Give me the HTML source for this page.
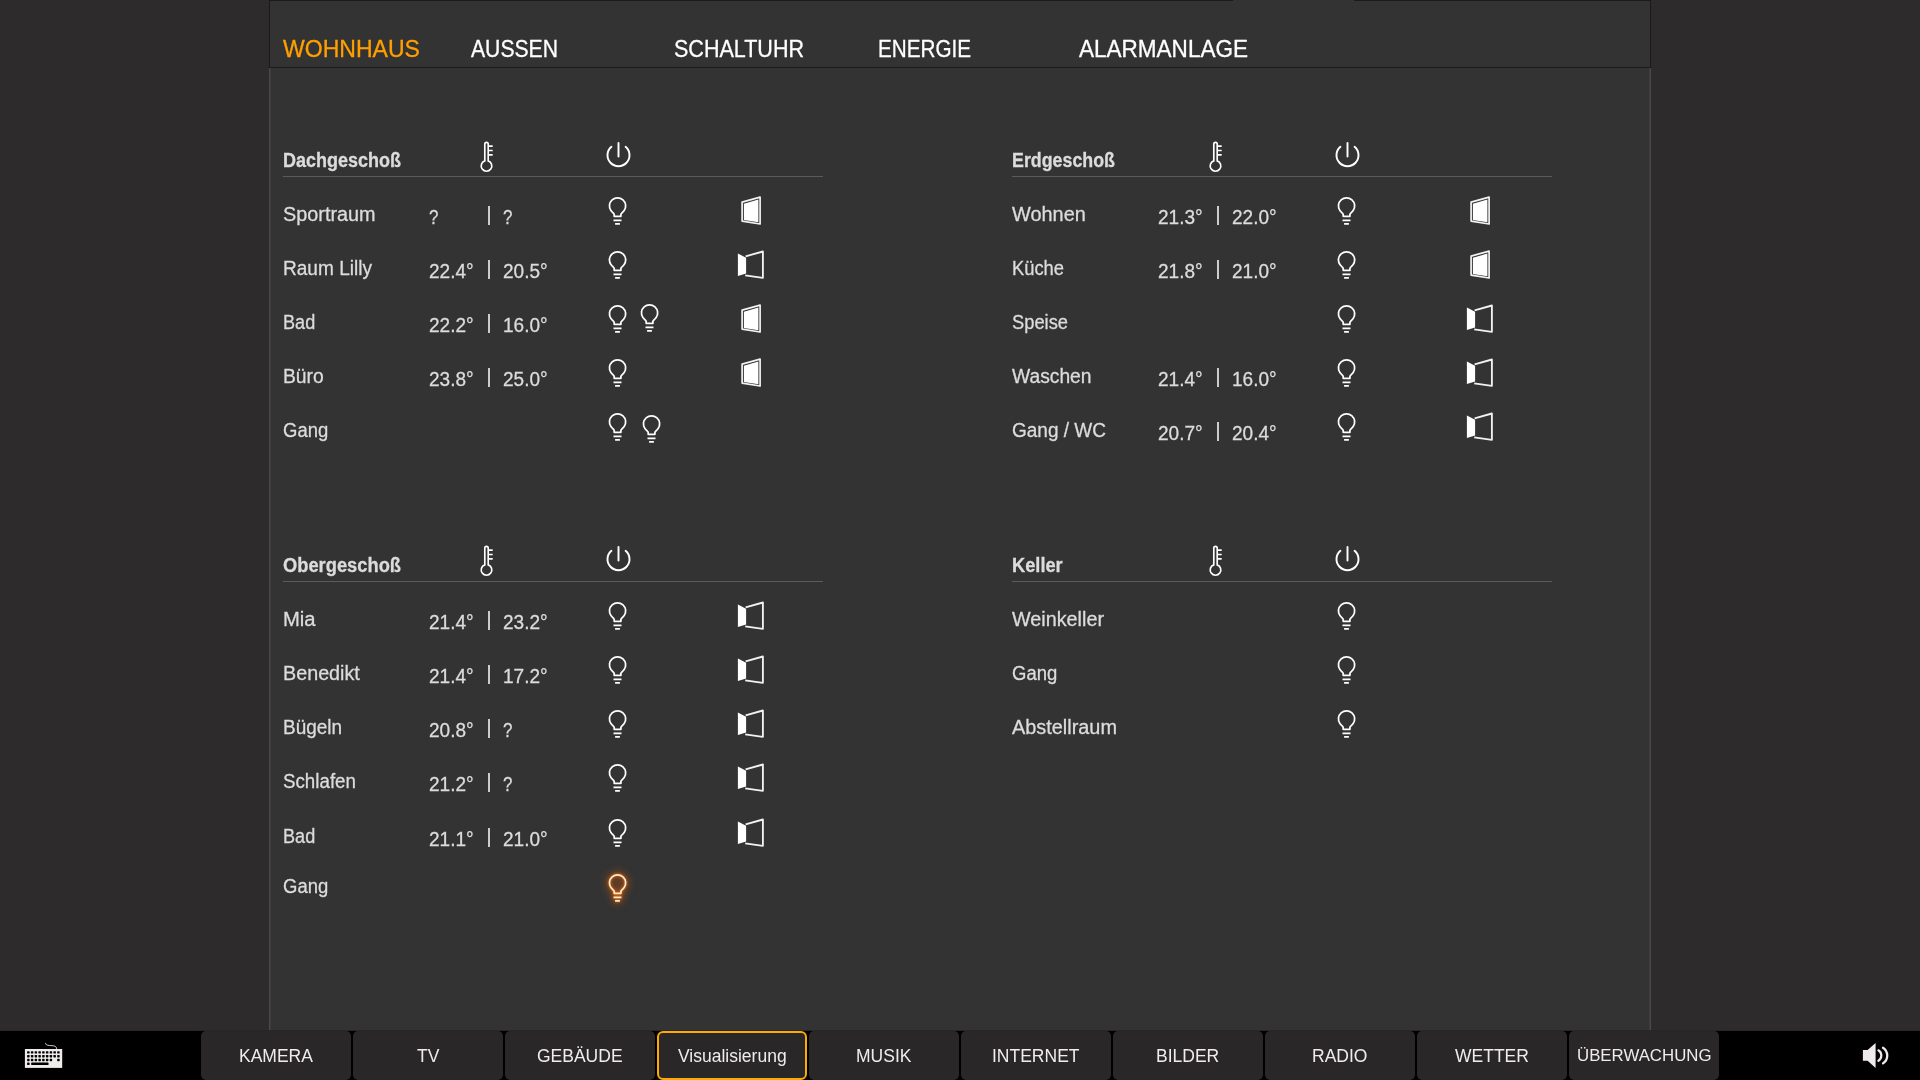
<!DOCTYPE html>
<html><head><meta charset="utf-8"><title>Visualisierung</title>
<style>
html,body{margin:0;padding:0;width:1920px;height:1080px;overflow:hidden;background:#2d2b2c;font-family:"Liberation Sans",sans-serif;}
.t{position:absolute;white-space:nowrap;transform-origin:0 0;-webkit-text-stroke:0.3px currentColor;}
.i{position:absolute;overflow:visible;}
.nf{-webkit-text-stroke:0;}
#hdr{position:absolute;left:269px;top:0;width:1380px;height:66px;background:#333;border:1px solid #1b1b1b;}
#gap{position:absolute;left:1233px;top:0;width:121px;height:1px;background:#333;}
#pnl{position:absolute;left:269px;top:68px;width:1380px;height:962px;background:#333;border-left:1px solid #494949;border-right:1px solid #494949;box-shadow:inset 1px 0 #3c3c3c,inset -1px 0 #3c3c3c;}
.ln{position:absolute;width:540px;height:1px;background:#5b5b5b;}
.bar{position:absolute;width:2.4px;height:19px;background:#cccccc;}
#foot{position:absolute;left:0;top:1030px;width:1920px;height:50px;background:#000;border-top:1px solid #2a2626;box-sizing:border-box;}
.btn{position:absolute;top:1031px;width:150px;height:49px;background:#292728;border-radius:5px;box-sizing:border-box;}
.btn.sel{border:2px solid #ffaa00;border-radius:6px;}
</style></head><body>
<div id="hdr"></div><div id="gap"></div>
<div id="pnl"></div>
<div id="foot"></div>
<div class="btn" style="left:201px"></div><div class="btn" style="left:353px"></div><div class="btn" style="left:505px"></div><div class="btn sel" style="left:657px"></div><div class="btn" style="left:809px"></div><div class="btn" style="left:961px"></div><div class="btn" style="left:1113px"></div><div class="btn" style="left:1265px"></div><div class="btn" style="left:1417px"></div><div class="btn" style="left:1569px"></div>
<svg class="i" style="left:20px;top:1038px" width="48" height="34" viewBox="0 0 48 34">
<path d="M25.6 4.9C25.2 6.4 26.8 7.3 29.5 7.5C33 7.8 35.2 7.6 36.2 9.2C36.6 9.9 36.6 10.5 36.6 11.2" fill="none" stroke="#e8e4e4" stroke-width="0.9"/>
<rect x="4.9" y="11" width="37.3" height="18.9" fill="#f0ecec"/>
<g fill="#000"><rect x="7.10" y="13.2" width="2.5" height="2.4" rx="0.6"/><rect x="10.86" y="13.2" width="2.5" height="2.4" rx="0.6"/><rect x="14.62" y="13.2" width="2.5" height="2.4" rx="0.6"/><rect x="18.38" y="13.2" width="2.5" height="2.4" rx="0.6"/><rect x="22.14" y="13.2" width="2.5" height="2.4" rx="0.6"/><rect x="25.90" y="13.2" width="2.5" height="2.4" rx="0.6"/><rect x="29.66" y="13.2" width="2.5" height="2.4" rx="0.6"/><rect x="33.42" y="13.2" width="2.5" height="2.4" rx="0.6"/><rect x="37.18" y="13.2" width="2.5" height="2.4" rx="0.6"/><rect x="7.10" y="17.0" width="2.5" height="2.4" rx="0.6"/><rect x="10.86" y="17.0" width="2.5" height="2.4" rx="0.6"/><rect x="14.62" y="17.0" width="2.5" height="2.4" rx="0.6"/><rect x="18.38" y="17.0" width="2.5" height="2.4" rx="0.6"/><rect x="22.14" y="17.0" width="2.5" height="2.4" rx="0.6"/><rect x="25.90" y="17.0" width="2.5" height="2.4" rx="0.6"/><rect x="29.66" y="17.0" width="2.5" height="2.4" rx="0.6"/><rect x="33.42" y="17.0" width="2.5" height="2.4" rx="0.6"/><rect x="37.18" y="17.0" width="2.5" height="2.4" rx="0.6"/><rect x="7.10" y="20.8" width="2.5" height="2.4" rx="0.6"/><rect x="10.86" y="20.8" width="2.5" height="2.4" rx="0.6"/><rect x="14.62" y="20.8" width="2.5" height="2.4" rx="0.6"/><rect x="18.38" y="20.8" width="2.5" height="2.4" rx="0.6"/><rect x="22.14" y="20.8" width="2.5" height="2.4" rx="0.6"/><rect x="25.90" y="20.8" width="2.5" height="2.4" rx="0.6"/><rect x="29.66" y="20.8" width="2.5" height="2.4" rx="0.6"/><rect x="37.18" y="20.8" width="2.5" height="2.4" rx="0.6"/><rect x="7.10" y="24.6" width="2.5" height="2.4" rx="0.6"/><rect x="11.2" y="24.6" width="17.3" height="2.4" rx="0.6"/></g></svg>
<svg class="i" style="left:1855px;top:1038px" width="40" height="34" viewBox="0 0 40 34"><path d="M7.9 12.1H12.6L20.6 5V29.9L12.6 22.7H7.9Z" fill="#f0ebeb"/><g fill="none" stroke="#f0ebeb" stroke-linecap="round"><path d="M23.4 12.3A6.2 6.2 0 0 1 23.4 22.8" stroke-width="2.2"/><path d="M28 9.8A9.3 9.3 0 0 1 28 25.4" stroke-width="2.3"/></g></svg>
<div class="t" style="left:283.00px;top:37px;font-size:24px;line-height:24px;color:#ffa000;transform:scaleX(0.9601);">WOHNHAUS</div><div class="t" style="left:471.00px;top:37px;font-size:24px;line-height:24px;color:#fff;transform:scaleX(0.8815);">AUSSEN</div><div class="t" style="left:674.00px;top:37px;font-size:24px;line-height:24px;color:#fff;transform:scaleX(0.8972);">SCHALTUHR</div><div class="t" style="left:878.00px;top:37px;font-size:24px;line-height:24px;color:#fff;transform:scaleX(0.8611);">ENERGIE</div><div class="t" style="left:1079.00px;top:37px;font-size:24px;line-height:24px;color:#fff;transform:scaleX(0.9384);">ALARMANLAGE</div><div class="t" style="left:283.00px;top:150px;font-size:20px;line-height:20px;color:#dcdcdc;font-weight:bold;transform:scaleX(0.9001);">Dachgeschoß</div><svg class="i" style="left:474px;top:138px" width="26" height="37" viewBox="0 0 26 37"><g fill="none" stroke="#fff" stroke-width="1.65"><path d="M10.8 22.9V6A1.7 1.7 0 0 1 14.2 6V22.9A5.3 5.3 0 1 1 10.8 22.9Z"/><path d="M14.2 8.05H18.7M14.2 12.5H18.7M14.2 16.8H18.7"/></g></svg><svg class="i" style="left:602px;top:137px" width="34" height="34" viewBox="0 0 34 34"><g fill="none" stroke="#fff" stroke-width="1.95" stroke-linecap="round"><path d="M16.5 5.9V19.4"/><path d="M9.4 9.8A11 11 0 1 0 23.6 9.8"/></g></svg><div class="ln" style="left:283px;top:176px"></div><div class="t" style="left:283.00px;top:204px;font-size:20px;line-height:20px;color:#dcdcdc;transform:scaleX(0.9914);">Sportraum</div><div class="t" style="left:429.00px;top:207px;font-size:20px;line-height:20px;color:#dcdcdc;transform:scaleX(0.8468);">?</div><div class="bar" style="left:487.6px;top:206px"></div><div class="t" style="left:503.00px;top:207px;font-size:20px;line-height:20px;color:#dcdcdc;transform:scaleX(0.8468);">?</div><svg class="i" style="left:604px;top:194px;" width="28" height="34" viewBox="0 0 28 34"><g fill="none" stroke="#fff" stroke-width="1.75"><path d="M10.2 22.3V20.6C10.2 19.2 8.07 18.2 6.92 16.55A8.1 8.1 0 1 1 20.18 16.55C19.03 18.2 16.9 19.2 16.9 20.6V22.3Z" stroke-linejoin="round"/><path d="M9.5 26.45H17.5M11.1 29.95H15.9"/></g></svg><svg class="i" style="left:736px;top:193px" width="30" height="35" viewBox="0 0 30 35"><path d="M6.1 9.1L24.1 4.1V31L6.1 28.1Z" fill="none" stroke="#f2f2f2" stroke-width="1.7" stroke-linejoin="round"/><path d="M7.9 10.7L22.4 6.6V29.2L7.9 26.9Z" fill="#fff"/></svg><div class="t" style="left:283.00px;top:258px;font-size:20px;line-height:20px;color:#dcdcdc;transform:scaleX(0.9529);">Raum Lilly</div><div class="t" style="left:429.00px;top:261px;font-size:20px;line-height:20px;color:#dcdcdc;transform:scaleX(0.9510);">22.4°</div><div class="bar" style="left:487.6px;top:260px"></div><div class="t" style="left:503.00px;top:261px;font-size:20px;line-height:20px;color:#dcdcdc;transform:scaleX(0.9510);">20.5°</div><svg class="i" style="left:604px;top:248px;" width="28" height="34" viewBox="0 0 28 34"><g fill="none" stroke="#fff" stroke-width="1.75"><path d="M10.2 22.3V20.6C10.2 19.2 8.07 18.2 6.92 16.55A8.1 8.1 0 1 1 20.18 16.55C19.03 18.2 16.9 19.2 16.9 20.6V22.3Z" stroke-linejoin="round"/><path d="M9.5 26.45H17.5M11.1 29.95H15.9"/></g></svg><svg class="i" style="left:733px;top:248px" width="35" height="35" viewBox="0 0 35 35"><path d="M12.6 8.3L29.9 3.5V29.8L12.2 27.3" fill="none" stroke="#f2f2f2" stroke-width="1.85" stroke-linejoin="round"/><path d="M4.9 5.5L13.1 9.7V25.6L4.9 27.9Z" fill="#fff"/></svg><div class="t" style="left:283.00px;top:312px;font-size:20px;line-height:20px;color:#dcdcdc;transform:scaleX(0.9045);">Bad</div><div class="t" style="left:429.00px;top:315px;font-size:20px;line-height:20px;color:#dcdcdc;transform:scaleX(0.9510);">22.2°</div><div class="bar" style="left:487.6px;top:314px"></div><div class="t" style="left:503.00px;top:315px;font-size:20px;line-height:20px;color:#dcdcdc;transform:scaleX(0.9510);">16.0°</div><svg class="i" style="left:604px;top:302px;" width="28" height="34" viewBox="0 0 28 34"><g fill="none" stroke="#fff" stroke-width="1.75"><path d="M10.2 22.3V20.6C10.2 19.2 8.07 18.2 6.92 16.55A8.1 8.1 0 1 1 20.18 16.55C19.03 18.2 16.9 19.2 16.9 20.6V22.3Z" stroke-linejoin="round"/><path d="M9.5 26.45H17.5M11.1 29.95H15.9"/></g></svg><svg class="i" style="left:636px;top:301px;" width="28" height="34" viewBox="0 0 28 34"><g fill="none" stroke="#fff" stroke-width="1.75"><path d="M10.2 22.3V20.6C10.2 19.2 8.07 18.2 6.92 16.55A8.1 8.1 0 1 1 20.18 16.55C19.03 18.2 16.9 19.2 16.9 20.6V22.3Z" stroke-linejoin="round"/><path d="M9.5 26.45H17.5M11.1 29.95H15.9"/></g></svg><svg class="i" style="left:736px;top:301px" width="30" height="35" viewBox="0 0 30 35"><path d="M6.1 9.1L24.1 4.1V31L6.1 28.1Z" fill="none" stroke="#f2f2f2" stroke-width="1.7" stroke-linejoin="round"/><path d="M7.9 10.7L22.4 6.6V29.2L7.9 26.9Z" fill="#fff"/></svg><div class="t" style="left:283.00px;top:366px;font-size:20px;line-height:20px;color:#dcdcdc;transform:scaleX(0.9645);">Büro</div><div class="t" style="left:429.00px;top:369px;font-size:20px;line-height:20px;color:#dcdcdc;transform:scaleX(0.9510);">23.8°</div><div class="bar" style="left:487.6px;top:368px"></div><div class="t" style="left:503.00px;top:369px;font-size:20px;line-height:20px;color:#dcdcdc;transform:scaleX(0.9510);">25.0°</div><svg class="i" style="left:604px;top:356px;" width="28" height="34" viewBox="0 0 28 34"><g fill="none" stroke="#fff" stroke-width="1.75"><path d="M10.2 22.3V20.6C10.2 19.2 8.07 18.2 6.92 16.55A8.1 8.1 0 1 1 20.18 16.55C19.03 18.2 16.9 19.2 16.9 20.6V22.3Z" stroke-linejoin="round"/><path d="M9.5 26.45H17.5M11.1 29.95H15.9"/></g></svg><svg class="i" style="left:736px;top:355px" width="30" height="35" viewBox="0 0 30 35"><path d="M6.1 9.1L24.1 4.1V31L6.1 28.1Z" fill="none" stroke="#f2f2f2" stroke-width="1.7" stroke-linejoin="round"/><path d="M7.9 10.7L22.4 6.6V29.2L7.9 26.9Z" fill="#fff"/></svg><div class="t" style="left:283.00px;top:420px;font-size:20px;line-height:20px;color:#dcdcdc;transform:scaleX(0.9243);">Gang</div><svg class="i" style="left:604px;top:410px;" width="28" height="34" viewBox="0 0 28 34"><g fill="none" stroke="#fff" stroke-width="1.75"><path d="M10.2 22.3V20.6C10.2 19.2 8.07 18.2 6.92 16.55A8.1 8.1 0 1 1 20.18 16.55C19.03 18.2 16.9 19.2 16.9 20.6V22.3Z" stroke-linejoin="round"/><path d="M9.5 26.45H17.5M11.1 29.95H15.9"/></g></svg><svg class="i" style="left:637.5px;top:411.8px;" width="28" height="34" viewBox="0 0 28 34"><g fill="none" stroke="#fff" stroke-width="1.75"><path d="M10.2 22.3V20.6C10.2 19.2 8.07 18.2 6.92 16.55A8.1 8.1 0 1 1 20.18 16.55C19.03 18.2 16.9 19.2 16.9 20.6V22.3Z" stroke-linejoin="round"/><path d="M9.5 26.45H17.5M11.1 29.95H15.9"/></g></svg><div class="t" style="left:1012.00px;top:150px;font-size:20px;line-height:20px;color:#dcdcdc;font-weight:bold;transform:scaleX(0.8910);">Erdgeschoß</div><svg class="i" style="left:1203px;top:138px" width="26" height="37" viewBox="0 0 26 37"><g fill="none" stroke="#fff" stroke-width="1.65"><path d="M10.8 22.9V6A1.7 1.7 0 0 1 14.2 6V22.9A5.3 5.3 0 1 1 10.8 22.9Z"/><path d="M14.2 8.05H18.7M14.2 12.5H18.7M14.2 16.8H18.7"/></g></svg><svg class="i" style="left:1331px;top:137px" width="34" height="34" viewBox="0 0 34 34"><g fill="none" stroke="#fff" stroke-width="1.95" stroke-linecap="round"><path d="M16.5 5.9V19.4"/><path d="M9.4 9.8A11 11 0 1 0 23.6 9.8"/></g></svg><div class="ln" style="left:1012px;top:176px"></div><div class="t" style="left:1012.00px;top:204px;font-size:20px;line-height:20px;color:#dcdcdc;transform:scaleX(0.9953);">Wohnen</div><div class="t" style="left:1158.00px;top:207px;font-size:20px;line-height:20px;color:#dcdcdc;transform:scaleX(0.9510);">21.3°</div><div class="bar" style="left:1216.6px;top:206px"></div><div class="t" style="left:1232.00px;top:207px;font-size:20px;line-height:20px;color:#dcdcdc;transform:scaleX(0.9510);">22.0°</div><svg class="i" style="left:1333px;top:194px;" width="28" height="34" viewBox="0 0 28 34"><g fill="none" stroke="#fff" stroke-width="1.75"><path d="M10.2 22.3V20.6C10.2 19.2 8.07 18.2 6.92 16.55A8.1 8.1 0 1 1 20.18 16.55C19.03 18.2 16.9 19.2 16.9 20.6V22.3Z" stroke-linejoin="round"/><path d="M9.5 26.45H17.5M11.1 29.95H15.9"/></g></svg><svg class="i" style="left:1465px;top:193px" width="30" height="35" viewBox="0 0 30 35"><path d="M6.1 9.1L24.1 4.1V31L6.1 28.1Z" fill="none" stroke="#f2f2f2" stroke-width="1.7" stroke-linejoin="round"/><path d="M7.9 10.7L22.4 6.6V29.2L7.9 26.9Z" fill="#fff"/></svg><div class="t" style="left:1012.00px;top:258px;font-size:20px;line-height:20px;color:#dcdcdc;transform:scaleX(0.9171);">Küche</div><div class="t" style="left:1158.00px;top:261px;font-size:20px;line-height:20px;color:#dcdcdc;transform:scaleX(0.9510);">21.8°</div><div class="bar" style="left:1216.6px;top:260px"></div><div class="t" style="left:1232.00px;top:261px;font-size:20px;line-height:20px;color:#dcdcdc;transform:scaleX(0.9510);">21.0°</div><svg class="i" style="left:1333px;top:248px;" width="28" height="34" viewBox="0 0 28 34"><g fill="none" stroke="#fff" stroke-width="1.75"><path d="M10.2 22.3V20.6C10.2 19.2 8.07 18.2 6.92 16.55A8.1 8.1 0 1 1 20.18 16.55C19.03 18.2 16.9 19.2 16.9 20.6V22.3Z" stroke-linejoin="round"/><path d="M9.5 26.45H17.5M11.1 29.95H15.9"/></g></svg><svg class="i" style="left:1465px;top:247px" width="30" height="35" viewBox="0 0 30 35"><path d="M6.1 9.1L24.1 4.1V31L6.1 28.1Z" fill="none" stroke="#f2f2f2" stroke-width="1.7" stroke-linejoin="round"/><path d="M7.9 10.7L22.4 6.6V29.2L7.9 26.9Z" fill="#fff"/></svg><div class="t" style="left:1012.00px;top:312px;font-size:20px;line-height:20px;color:#dcdcdc;transform:scaleX(0.9150);">Speise</div><svg class="i" style="left:1333px;top:302px;" width="28" height="34" viewBox="0 0 28 34"><g fill="none" stroke="#fff" stroke-width="1.75"><path d="M10.2 22.3V20.6C10.2 19.2 8.07 18.2 6.92 16.55A8.1 8.1 0 1 1 20.18 16.55C19.03 18.2 16.9 19.2 16.9 20.6V22.3Z" stroke-linejoin="round"/><path d="M9.5 26.45H17.5M11.1 29.95H15.9"/></g></svg><svg class="i" style="left:1462px;top:302px" width="35" height="35" viewBox="0 0 35 35"><path d="M12.6 8.3L29.9 3.5V29.8L12.2 27.3" fill="none" stroke="#f2f2f2" stroke-width="1.85" stroke-linejoin="round"/><path d="M4.9 5.5L13.1 9.7V25.6L4.9 27.9Z" fill="#fff"/></svg><div class="t" style="left:1012.00px;top:366px;font-size:20px;line-height:20px;color:#dcdcdc;transform:scaleX(0.9625);">Waschen</div><div class="t" style="left:1158.00px;top:369px;font-size:20px;line-height:20px;color:#dcdcdc;transform:scaleX(0.9510);">21.4°</div><div class="bar" style="left:1216.6px;top:368px"></div><div class="t" style="left:1232.00px;top:369px;font-size:20px;line-height:20px;color:#dcdcdc;transform:scaleX(0.9510);">16.0°</div><svg class="i" style="left:1333px;top:356px;" width="28" height="34" viewBox="0 0 28 34"><g fill="none" stroke="#fff" stroke-width="1.75"><path d="M10.2 22.3V20.6C10.2 19.2 8.07 18.2 6.92 16.55A8.1 8.1 0 1 1 20.18 16.55C19.03 18.2 16.9 19.2 16.9 20.6V22.3Z" stroke-linejoin="round"/><path d="M9.5 26.45H17.5M11.1 29.95H15.9"/></g></svg><svg class="i" style="left:1462px;top:356px" width="35" height="35" viewBox="0 0 35 35"><path d="M12.6 8.3L29.9 3.5V29.8L12.2 27.3" fill="none" stroke="#f2f2f2" stroke-width="1.85" stroke-linejoin="round"/><path d="M4.9 5.5L13.1 9.7V25.6L4.9 27.9Z" fill="#fff"/></svg><div class="t" style="left:1012.00px;top:420px;font-size:20px;line-height:20px;color:#dcdcdc;transform:scaleX(0.9505);">Gang / WC</div><div class="t" style="left:1158.00px;top:423px;font-size:20px;line-height:20px;color:#dcdcdc;transform:scaleX(0.9510);">20.7°</div><div class="bar" style="left:1216.6px;top:422px"></div><div class="t" style="left:1232.00px;top:423px;font-size:20px;line-height:20px;color:#dcdcdc;transform:scaleX(0.9510);">20.4°</div><svg class="i" style="left:1333px;top:410px;" width="28" height="34" viewBox="0 0 28 34"><g fill="none" stroke="#fff" stroke-width="1.75"><path d="M10.2 22.3V20.6C10.2 19.2 8.07 18.2 6.92 16.55A8.1 8.1 0 1 1 20.18 16.55C19.03 18.2 16.9 19.2 16.9 20.6V22.3Z" stroke-linejoin="round"/><path d="M9.5 26.45H17.5M11.1 29.95H15.9"/></g></svg><svg class="i" style="left:1462px;top:410px" width="35" height="35" viewBox="0 0 35 35"><path d="M12.6 8.3L29.9 3.5V29.8L12.2 27.3" fill="none" stroke="#f2f2f2" stroke-width="1.85" stroke-linejoin="round"/><path d="M4.9 5.5L13.1 9.7V25.6L4.9 27.9Z" fill="#fff"/></svg><div class="t" style="left:283.00px;top:555px;font-size:20px;line-height:20px;color:#dcdcdc;font-weight:bold;transform:scaleX(0.9154);">Obergeschoß</div><svg class="i" style="left:474px;top:542px" width="26" height="37" viewBox="0 0 26 37"><g fill="none" stroke="#fff" stroke-width="1.65"><path d="M10.8 22.9V6A1.7 1.7 0 0 1 14.2 6V22.9A5.3 5.3 0 1 1 10.8 22.9Z"/><path d="M14.2 8.05H18.7M14.2 12.5H18.7M14.2 16.8H18.7"/></g></svg><svg class="i" style="left:602px;top:541px" width="34" height="34" viewBox="0 0 34 34"><g fill="none" stroke="#fff" stroke-width="1.95" stroke-linecap="round"><path d="M16.5 5.9V19.4"/><path d="M9.4 9.8A11 11 0 1 0 23.6 9.8"/></g></svg><div class="ln" style="left:283px;top:581px"></div><div class="t" style="left:283.00px;top:609px;font-size:20px;line-height:20px;color:#dcdcdc;transform:scaleX(1.0124);">Mia</div><div class="t" style="left:429.00px;top:612px;font-size:20px;line-height:20px;color:#dcdcdc;transform:scaleX(0.9510);">21.4°</div><div class="bar" style="left:487.6px;top:611px"></div><div class="t" style="left:503.00px;top:612px;font-size:20px;line-height:20px;color:#dcdcdc;transform:scaleX(0.9510);">23.2°</div><svg class="i" style="left:604px;top:599px;" width="28" height="34" viewBox="0 0 28 34"><g fill="none" stroke="#fff" stroke-width="1.75"><path d="M10.2 22.3V20.6C10.2 19.2 8.07 18.2 6.92 16.55A8.1 8.1 0 1 1 20.18 16.55C19.03 18.2 16.9 19.2 16.9 20.6V22.3Z" stroke-linejoin="round"/><path d="M9.5 26.45H17.5M11.1 29.95H15.9"/></g></svg><svg class="i" style="left:733px;top:599px" width="35" height="35" viewBox="0 0 35 35"><path d="M12.6 8.3L29.9 3.5V29.8L12.2 27.3" fill="none" stroke="#f2f2f2" stroke-width="1.85" stroke-linejoin="round"/><path d="M4.9 5.5L13.1 9.7V25.6L4.9 27.9Z" fill="#fff"/></svg><div class="t" style="left:283.00px;top:663px;font-size:20px;line-height:20px;color:#dcdcdc;transform:scaleX(0.9871);">Benedikt</div><div class="t" style="left:429.00px;top:666px;font-size:20px;line-height:20px;color:#dcdcdc;transform:scaleX(0.9510);">21.4°</div><div class="bar" style="left:487.6px;top:665px"></div><div class="t" style="left:503.00px;top:666px;font-size:20px;line-height:20px;color:#dcdcdc;transform:scaleX(0.9510);">17.2°</div><svg class="i" style="left:604px;top:653px;" width="28" height="34" viewBox="0 0 28 34"><g fill="none" stroke="#fff" stroke-width="1.75"><path d="M10.2 22.3V20.6C10.2 19.2 8.07 18.2 6.92 16.55A8.1 8.1 0 1 1 20.18 16.55C19.03 18.2 16.9 19.2 16.9 20.6V22.3Z" stroke-linejoin="round"/><path d="M9.5 26.45H17.5M11.1 29.95H15.9"/></g></svg><svg class="i" style="left:733px;top:653px" width="35" height="35" viewBox="0 0 35 35"><path d="M12.6 8.3L29.9 3.5V29.8L12.2 27.3" fill="none" stroke="#f2f2f2" stroke-width="1.85" stroke-linejoin="round"/><path d="M4.9 5.5L13.1 9.7V25.6L4.9 27.9Z" fill="#fff"/></svg><div class="t" style="left:283.00px;top:717px;font-size:20px;line-height:20px;color:#dcdcdc;transform:scaleX(0.9470);">Bügeln</div><div class="t" style="left:429.00px;top:720px;font-size:20px;line-height:20px;color:#dcdcdc;transform:scaleX(0.9510);">20.8°</div><div class="bar" style="left:487.6px;top:719px"></div><div class="t" style="left:503.00px;top:720px;font-size:20px;line-height:20px;color:#dcdcdc;transform:scaleX(0.8468);">?</div><svg class="i" style="left:604px;top:707px;" width="28" height="34" viewBox="0 0 28 34"><g fill="none" stroke="#fff" stroke-width="1.75"><path d="M10.2 22.3V20.6C10.2 19.2 8.07 18.2 6.92 16.55A8.1 8.1 0 1 1 20.18 16.55C19.03 18.2 16.9 19.2 16.9 20.6V22.3Z" stroke-linejoin="round"/><path d="M9.5 26.45H17.5M11.1 29.95H15.9"/></g></svg><svg class="i" style="left:733px;top:707px" width="35" height="35" viewBox="0 0 35 35"><path d="M12.6 8.3L29.9 3.5V29.8L12.2 27.3" fill="none" stroke="#f2f2f2" stroke-width="1.85" stroke-linejoin="round"/><path d="M4.9 5.5L13.1 9.7V25.6L4.9 27.9Z" fill="#fff"/></svg><div class="t" style="left:283.00px;top:771px;font-size:20px;line-height:20px;color:#dcdcdc;transform:scaleX(0.9370);">Schlafen</div><div class="t" style="left:429.00px;top:774px;font-size:20px;line-height:20px;color:#dcdcdc;transform:scaleX(0.9510);">21.2°</div><div class="bar" style="left:487.6px;top:773px"></div><div class="t" style="left:503.00px;top:774px;font-size:20px;line-height:20px;color:#dcdcdc;transform:scaleX(0.8468);">?</div><svg class="i" style="left:604px;top:761px;" width="28" height="34" viewBox="0 0 28 34"><g fill="none" stroke="#fff" stroke-width="1.75"><path d="M10.2 22.3V20.6C10.2 19.2 8.07 18.2 6.92 16.55A8.1 8.1 0 1 1 20.18 16.55C19.03 18.2 16.9 19.2 16.9 20.6V22.3Z" stroke-linejoin="round"/><path d="M9.5 26.45H17.5M11.1 29.95H15.9"/></g></svg><svg class="i" style="left:733px;top:761px" width="35" height="35" viewBox="0 0 35 35"><path d="M12.6 8.3L29.9 3.5V29.8L12.2 27.3" fill="none" stroke="#f2f2f2" stroke-width="1.85" stroke-linejoin="round"/><path d="M4.9 5.5L13.1 9.7V25.6L4.9 27.9Z" fill="#fff"/></svg><div class="t" style="left:283.00px;top:826px;font-size:20px;line-height:20px;color:#dcdcdc;transform:scaleX(0.9045);">Bad</div><div class="t" style="left:429.00px;top:829px;font-size:20px;line-height:20px;color:#dcdcdc;transform:scaleX(0.9510);">21.1°</div><div class="bar" style="left:487.6px;top:828px"></div><div class="t" style="left:503.00px;top:829px;font-size:20px;line-height:20px;color:#dcdcdc;transform:scaleX(0.9510);">21.0°</div><svg class="i" style="left:604px;top:816px;" width="28" height="34" viewBox="0 0 28 34"><g fill="none" stroke="#fff" stroke-width="1.75"><path d="M10.2 22.3V20.6C10.2 19.2 8.07 18.2 6.92 16.55A8.1 8.1 0 1 1 20.18 16.55C19.03 18.2 16.9 19.2 16.9 20.6V22.3Z" stroke-linejoin="round"/><path d="M9.5 26.45H17.5M11.1 29.95H15.9"/></g></svg><svg class="i" style="left:733px;top:816px" width="35" height="35" viewBox="0 0 35 35"><path d="M12.6 8.3L29.9 3.5V29.8L12.2 27.3" fill="none" stroke="#f2f2f2" stroke-width="1.85" stroke-linejoin="round"/><path d="M4.9 5.5L13.1 9.7V25.6L4.9 27.9Z" fill="#fff"/></svg><div class="t" style="left:283.00px;top:876px;font-size:20px;line-height:20px;color:#dcdcdc;transform:scaleX(0.9243);">Gang</div><svg class="i" style="left:604px;top:870.5px;filter:drop-shadow(0 0 1.5px #ff7800) drop-shadow(0 0 4px #e86000);" width="28" height="34" viewBox="0 0 28 34"><g fill="none" stroke="#ffe7c8" stroke-width="1.75"><path d="M10.2 22.3V20.6C10.2 19.2 8.07 18.2 6.92 16.55A8.1 8.1 0 1 1 20.18 16.55C19.03 18.2 16.9 19.2 16.9 20.6V22.3Z" stroke-linejoin="round"/><path d="M9.5 26.45H17.5M11.1 29.95H15.9"/></g></svg><div class="t" style="left:1012.00px;top:555px;font-size:20px;line-height:20px;color:#dcdcdc;font-weight:bold;transform:scaleX(0.9119);">Keller</div><svg class="i" style="left:1203px;top:542px" width="26" height="37" viewBox="0 0 26 37"><g fill="none" stroke="#fff" stroke-width="1.65"><path d="M10.8 22.9V6A1.7 1.7 0 0 1 14.2 6V22.9A5.3 5.3 0 1 1 10.8 22.9Z"/><path d="M14.2 8.05H18.7M14.2 12.5H18.7M14.2 16.8H18.7"/></g></svg><svg class="i" style="left:1331px;top:541px" width="34" height="34" viewBox="0 0 34 34"><g fill="none" stroke="#fff" stroke-width="1.95" stroke-linecap="round"><path d="M16.5 5.9V19.4"/><path d="M9.4 9.8A11 11 0 1 0 23.6 9.8"/></g></svg><div class="ln" style="left:1012px;top:581px"></div><div class="t" style="left:1012.00px;top:609px;font-size:20px;line-height:20px;color:#dcdcdc;transform:scaleX(0.9892);">Weinkeller</div><svg class="i" style="left:1333px;top:599px;" width="28" height="34" viewBox="0 0 28 34"><g fill="none" stroke="#fff" stroke-width="1.75"><path d="M10.2 22.3V20.6C10.2 19.2 8.07 18.2 6.92 16.55A8.1 8.1 0 1 1 20.18 16.55C19.03 18.2 16.9 19.2 16.9 20.6V22.3Z" stroke-linejoin="round"/><path d="M9.5 26.45H17.5M11.1 29.95H15.9"/></g></svg><div class="t" style="left:1012.00px;top:663px;font-size:20px;line-height:20px;color:#dcdcdc;transform:scaleX(0.9243);">Gang</div><svg class="i" style="left:1333px;top:653px;" width="28" height="34" viewBox="0 0 28 34"><g fill="none" stroke="#fff" stroke-width="1.75"><path d="M10.2 22.3V20.6C10.2 19.2 8.07 18.2 6.92 16.55A8.1 8.1 0 1 1 20.18 16.55C19.03 18.2 16.9 19.2 16.9 20.6V22.3Z" stroke-linejoin="round"/><path d="M9.5 26.45H17.5M11.1 29.95H15.9"/></g></svg><div class="t" style="left:1012.00px;top:717px;font-size:20px;line-height:20px;color:#dcdcdc;transform:scaleX(0.9943);">Abstellraum</div><svg class="i" style="left:1333px;top:707px;" width="28" height="34" viewBox="0 0 28 34"><g fill="none" stroke="#fff" stroke-width="1.75"><path d="M10.2 22.3V20.6C10.2 19.2 8.07 18.2 6.92 16.55A8.1 8.1 0 1 1 20.18 16.55C19.03 18.2 16.9 19.2 16.9 20.6V22.3Z" stroke-linejoin="round"/><path d="M9.5 26.45H17.5M11.1 29.95H15.9"/></g></svg><div class="t nf" style="left:239.05px;top:1048px;font-size:17.5px;line-height:17.5px;color:#f0ecec;transform:scaleX(0.9999);">KAMERA</div><div class="t nf" style="left:416.80px;top:1048px;font-size:17.5px;line-height:17.5px;color:#f0ecec;transform:scaleX(0.9999);">TV</div><div class="t nf" style="left:537.20px;top:1048px;font-size:17.5px;line-height:17.5px;color:#f0ecec;transform:scaleX(0.9999);">GEBÄUDE</div><div class="t nf" style="left:677.70px;top:1048px;font-size:17.5px;line-height:17.5px;color:#f0ecec;transform:scaleX(0.9999);">Visualisierung</div><div class="t nf" style="left:856.30px;top:1048px;font-size:17.5px;line-height:17.5px;color:#f0ecec;transform:scaleX(0.9999);">MUSIK</div><div class="t nf" style="left:992.25px;top:1048px;font-size:17.5px;line-height:17.5px;color:#f0ecec;transform:scaleX(0.9999);">INTERNET</div><div class="t nf" style="left:1156.40px;top:1048px;font-size:17.5px;line-height:17.5px;color:#f0ecec;transform:scaleX(0.9999);">BILDER</div><div class="t nf" style="left:1312.30px;top:1048px;font-size:17.5px;line-height:17.5px;color:#f0ecec;transform:scaleX(0.9999);">RADIO</div><div class="t nf" style="left:1455.05px;top:1048px;font-size:17.5px;line-height:17.5px;color:#f0ecec;transform:scaleX(0.9999);">WETTER</div><div class="t nf" style="left:1576.70px;top:1047px;font-size:17px;line-height:17px;color:#f0ecec;transform:scaleX(0.9890);">ÜBERWACHUNG</div>
</body></html>
